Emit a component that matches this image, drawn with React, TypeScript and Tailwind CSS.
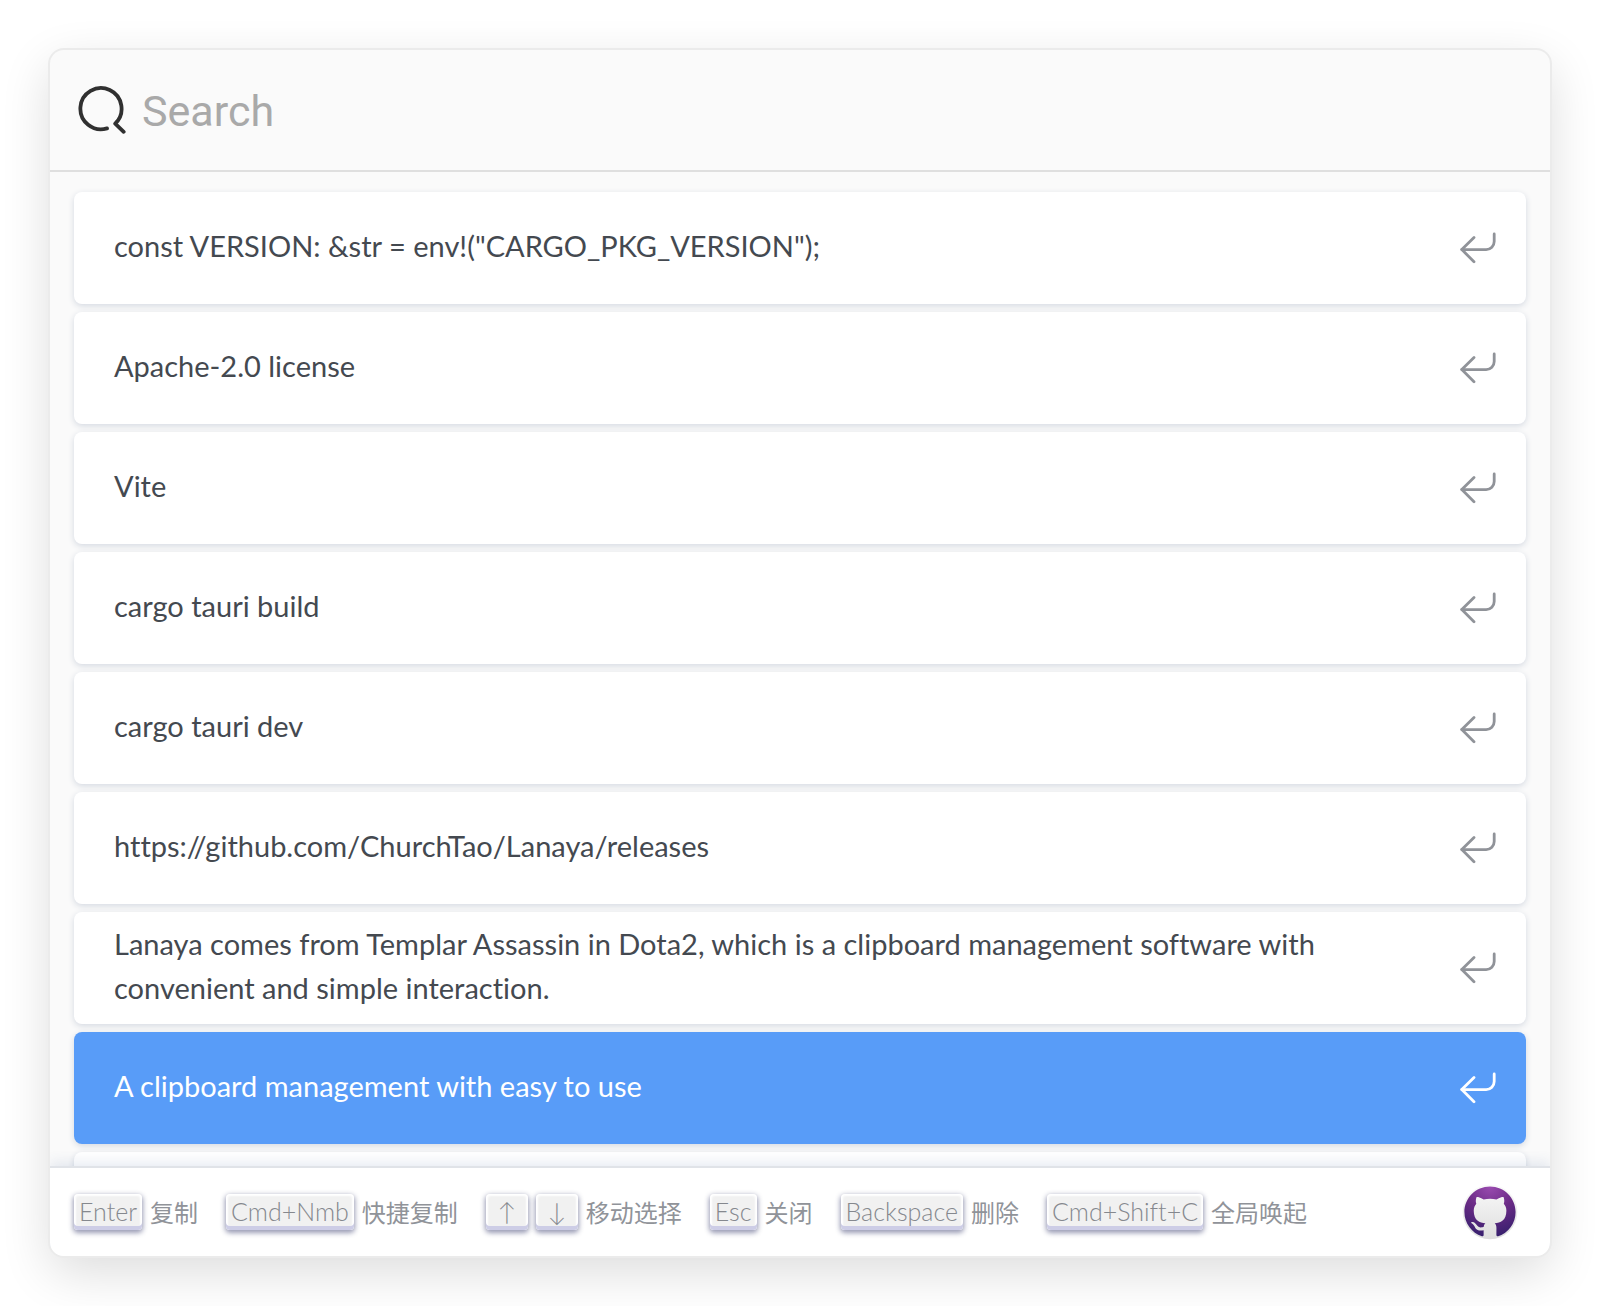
import { useState } from 'react';

interface ClipItem {
    id: number;
    content: string;
}

interface Shortcut {
    keys: string[];
    label: string;
}

const items: ClipItem[] = [
    { id: 1, content: 'const VERSION: &str = env!("CARGO_PKG_VERSION");' },
    { id: 2, content: 'Apache-2.0 license' },
    { id: 3, content: 'Vite' },
    { id: 4, content: 'cargo tauri build' },
    { id: 5, content: 'cargo tauri dev' },
    { id: 6, content: 'https://github.com/ChurchTao/Lanaya/releases' },
    {
        id: 7,
        content:
            'Lanaya comes from Templar Assassin in Dota2, which is a clipboard management software with convenient and simple interaction.',
    },
    { id: 8, content: 'A clipboard management with easy to use' },
    { id: 9, content: '' },
];

const shortcuts: Shortcut[] = [
    { keys: ['Enter'], label: '复制' },
    { keys: ['Cmd+Nmb'], label: '快捷复制' },
    { keys: ['↑', '↓'], label: '移动选择' },
    { keys: ['Esc'], label: '关闭' },
    { keys: ['Backspace'], label: '删除' },
    { keys: ['Cmd+Shift+C'], label: '全局唤起' },
];

function SearchIcon() {
    return (
        <svg className="h-12 w-12 shrink-0" viewBox="0 0 48 48" fill="none" stroke="#303030" strokeWidth="3.8" strokeLinecap="round" strokeLinejoin="round" aria-hidden="true">
            <path d="M29 42.4A20.6 20.6 0 1 1 37.2 37.6L45.7 45.8" />
        </svg>
    );
}

function EnterIcon() {
    return (
        <svg className="h-9 w-9 shrink-0" viewBox="0 0 36 36" fill="none" stroke="currentColor" strokeWidth="2.8" strokeLinecap="round" strokeLinejoin="round" aria-hidden="true">
            <path d="M34.2 4v7.6a8 8 0 0 1-8 8H1.8" />
            <path d="M14 7.6 1.8 19.6 14 31.8" />
        </svg>
    );
}

function GithubLogo() {
    return (
        <svg className="h-14 w-14" viewBox="0 0 56 56" aria-hidden="true">
            <defs>
                <radialGradient id="purple" cx="0.5" cy="0" r="1">
                    <stop offset="0" stopColor="#9a4bb0" />
                    <stop offset="0.5" stopColor="#6b2b86" />
                    <stop offset="1" stopColor="#38206e" />
                </radialGradient>
                <linearGradient id="ring" x1="0" y1="0" x2="0" y2="1">
                    <stop offset="0" stopColor="#fafafa" />
                    <stop offset="1" stopColor="#dedede" />
                </linearGradient>
            </defs>
            <circle cx="28" cy="28" r="27.3" fill="url(#ring)" />
            <path
                transform="translate(2.4 2.4) scale(3.2)"
                fill="url(#purple)"
                d="M8 0C3.58 0 0 3.58 0 8c0 3.54 2.29 6.53 5.47 7.59.4.07.55-.17.55-.38 0-.19-.01-.82-.01-1.49-2.01.37-2.53-.49-2.69-.94-.09-.23-.48-.94-.82-1.13-.28-.15-.68-.52-.01-.53.63-.01 1.08.58 1.23.82.72 1.21 1.87.87 2.33.66.07-.52.28-.87.51-1.07-1.78-.2-3.64-.89-3.64-3.95 0-.87.31-1.59.82-2.15-.08-.2-.36-1.02.08-2.12 0 0 .67-.21 2.2.82.64-.18 1.32-.27 2-.27s1.36.09 2 .27c1.53-1.04 2.2-.82 2.2-.82.44 1.1.16 1.92.08 2.12.51.56.82 1.27.82 2.15 0 3.07-1.87 3.75-3.65 3.95.29.25.54.73.54 1.48 0 1.07-.01 1.93-.01 2.2 0 .21.15.46.55.38A8.01 8.01 0 0 0 16 8c0-4.42-3.58-8-8-8z"
            />
        </svg>
    );
}

function ClipRow({ item, selected, onSelect }: { item: ClipItem; selected: boolean; onSelect: () => void }) {
    return (
        <li>
            <button
                type="button"
                onClick={onSelect}
                className={`flex h-28 w-full items-center justify-between rounded-lg pr-[30px] pl-10 text-left shadow-[0_2px_6px_0_#d4d9e1] ${
                    selected ? 'bg-[#589cf8] text-white' : 'bg-white text-[#444950]'
                }`}
            >
                <span className="max-w-[1240px] pb-1 text-[29px] leading-[44px] [font-variant-ligatures:none]">{item.content}</span>
                <span className={selected ? 'text-white' : 'text-[#909399]'}>
                    <EnterIcon />
                </span>
            </button>
        </li>
    );
}

export default function App() {
    const [query, setQuery] = useState('');
    const [selectedId, setSelectedId] = useState(8);

    return (
        <div className="h-screen bg-white p-[50px] font-[Lato,'Noto_Sans_CJK_SC',sans-serif]">
            <main className="flex h-full flex-col overflow-hidden rounded-[14px] bg-[#fafafa] shadow-[0_0_0_2px_#ebebeb,0_16px_50px_0_rgba(0,0,0,0.14)]">
                {/* Search bar */}
                <header className="flex h-[122px] shrink-0 items-center gap-4 border-b-2 border-[#dfdfdf] px-7">
                    <SearchIcon />
                    <input
                        type="text"
                        aria-label="Search"
                        placeholder="Search"
                        value={query}
                        onChange={(e) => setQuery(e.target.value)}
                        className="min-w-0 flex-1 bg-transparent pt-0.5 font-[Roboto,sans-serif] text-[43px] leading-[56px] text-[#303030] outline-none placeholder:text-[#a9a9a9]"
                    />
                </header>

                {/* Clipboard records */}
                <ul className="flex min-h-0 flex-1 flex-col gap-2 overflow-hidden px-6 pt-5">
                    {items.map((item) => (
                        <ClipRow key={item.id} item={item} selected={item.id === selectedId} onSelect={() => setSelectedId(item.id)} />
                    ))}
                </ul>

                {/* Shortcut hints */}
                <footer className="relative flex h-[88px] shrink-0 items-center justify-between bg-white pr-8 pl-6 shadow-[0_-2px_0_0_#e0e3e8,0_-6px_12px_0_rgba(69,98,155,0.12)]">
                    <ul className="flex items-center gap-7 text-2xl text-[#909399]">
                        {shortcuts.map((shortcut) => (
                            <li key={shortcut.label} className="flex items-center gap-2">
                                {shortcut.keys.map((key) => (
                                    <kbd
                                        key={key}
                                        className="flex h-9 min-w-[42px] items-center justify-center rounded-[4px] bg-[#f1f1f1] px-[5px] pb-0.5 font-[Lato,'Noto_Sans_CJK_SC',sans-serif] text-[25px] leading-8 font-light text-[#85888e] [font-variant-ligatures:none] shadow-[inset_0_-4px_0_0_#cdcde6,inset_0_0_2px_2px_#fff,0_2px_5px_1px_rgba(30,35,90,0.45)]"
                                    >
                                        {key}
                                    </kbd>
                                ))}
                                <span className="pt-0.5 leading-9">{shortcut.label}</span>
                            </li>
                        ))}
                    </ul>
                    <a href="https://github.com/ChurchTao/Lanaya" aria-label="GitHub">
                        <GithubLogo />
                    </a>
                </footer>
            </main>
        </div>
    );
}
